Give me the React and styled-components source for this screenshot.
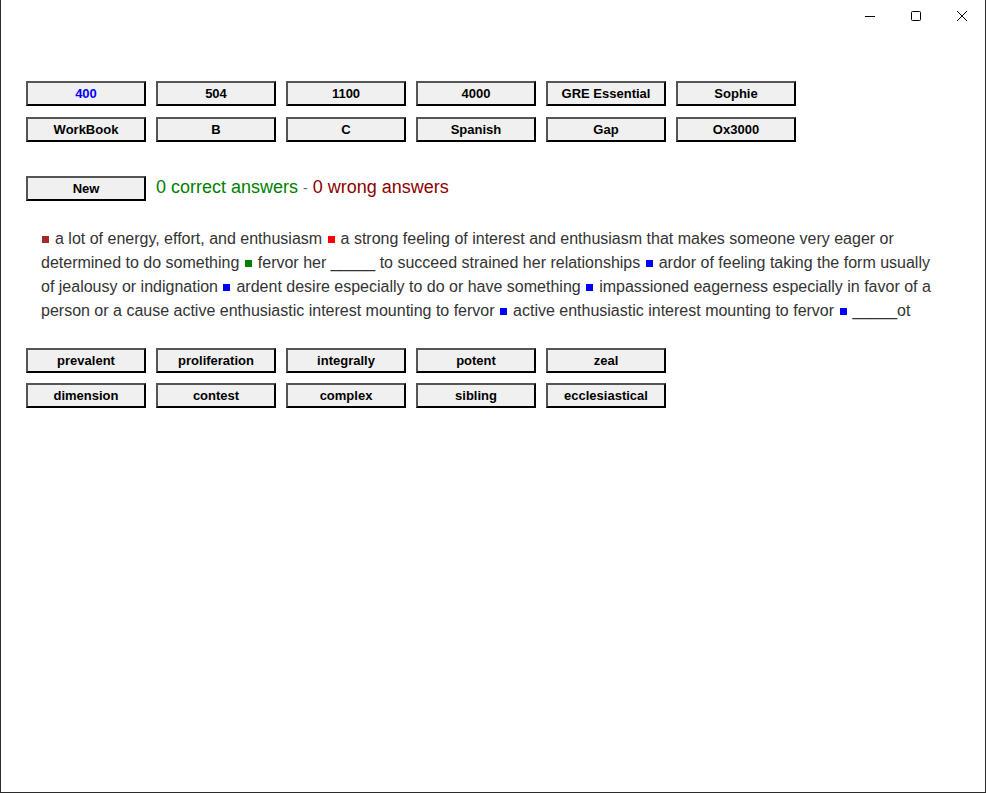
import React from 'react';
import styled, { createGlobalStyle } from 'styled-components';

const GlobalStyle = createGlobalStyle`
  html, body {
    margin: 0;
    padding: 0;
    background: #fff;
  }
  body {
    font-family: "Liberation Sans", Arial, sans-serif;
  }
`;

const Window = styled.div`
  width: 986px;
  height: 793px;
  box-sizing: border-box;
  border: 1px solid #2b2b2b;
  border-top: none;
  background: #fff;
  display: flex;
  flex-direction: column;
`;

const TitleBar = styled.div`
  height: 32px;
  display: flex;
  justify-content: flex-end;
`;

const Control = styled.div`
  width: 46px;
  height: 32px;
  display: flex;
  align-items: center;
  justify-content: center;
`;

const Content = styled.div`
  padding: 49px 0 0 25px;
`;

const ButtonGrid = styled.div`
  display: grid;
  grid-template-columns: repeat(${p => p.cols}, 120px);
  column-gap: 10px;
  row-gap: ${p => p.rowGap}px;
`;

const Btn = styled.button`
  width: 120px;
  height: 25px;
  box-sizing: border-box;
  padding: 0;
  background: #f0f0f0;
  border-style: solid;
  border-width: 2px;
  border-color: #555 #000 #000 #555;
  font-family: "Liberation Sans", Arial, sans-serif;
  font-size: 13px;
  font-weight: bold;
  color: ${p => (p.active ? '#0000ff' : '#000')};
  cursor: pointer;
`;

const ScoreRow = styled.div`
  display: flex;
  align-items: center;
  margin-top: 34px;
  gap: 10px;
`;

const Score = styled.div`
  font-size: 18px;
  display: flex;
  align-items: baseline;
  gap: 5px;
  margin-top: -2px;
`;

const Right = styled.span`
  color: #008000;
`;

const Wrong = styled.span`
  color: #8b0000;
`;

const Dash = styled.span`
  color: #666;
  font-size: 14px;
`;

const Definitions = styled.p`
  margin: 26px 0 0 15px;
  width: 900px;
  font-size: 16px;
  line-height: 24px;
  color: #333;
`;

const Mark = styled.span`
  display: inline-block;
  width: 7px;
  height: 7px;
  margin: 0 6px 0 1px;
  background: ${p => p.color};
  vertical-align: 1px;
`;

const WordGrid = styled(ButtonGrid)`
  margin-top: 25px;
`;

const books = ['400', '504', '1100', '4000', 'GRE Essential', 'Sophie', 'WorkBook', 'B', 'C', 'Spanish', 'Gap', 'Ox3000'];
const words = ['prevalent', 'proliferation', 'integrally', 'potent', 'zeal', 'dimension', 'contest', 'complex', 'sibling', 'ecclesiastical'];

const defs = [
  ['#a52a2a', 'a lot of energy, effort, and enthusiasm'],
  ['#ff0000', 'a strong feeling of interest and enthusiasm that makes someone very eager or determined to do something'],
  ['#008000', 'fervor her _____ to succeed strained her relationships'],
  ['#0000ff', 'ardor of feeling taking the form usually of jealousy or indignation'],
  ['#0000ff', 'ardent desire especially to do or have something'],
  ['#0000ff', 'impassioned eagerness especially in favor of a person or a cause active enthusiastic interest mounting to fervor'],
  ['#0000ff', 'active enthusiastic interest mounting to fervor'],
  ['#0000ff', '_____ot'],
];

export default function App() {
  return (
    <>
      <GlobalStyle />
      <Window>
        <TitleBar>
          <Control>
            <svg width="10" height="10" viewBox="0 0 10 10"><path d="M0 5.5h10" stroke="#000" strokeWidth="1" /></svg>
          </Control>
          <Control>
            <svg width="10" height="10" viewBox="0 0 10 10"><rect x="0.5" y="0.5" width="9" height="9" rx="1" fill="none" stroke="#000" strokeWidth="1" /></svg>
          </Control>
          <Control>
            <svg width="10" height="10" viewBox="0 0 10 10"><path d="M0 0L10 10M10 0L0 10" stroke="#000" strokeWidth="1" /></svg>
          </Control>
        </TitleBar>
        <Content>
          <ButtonGrid cols={6} rowGap={11}>
            {books.map((b, i) => (
              <Btn key={b} active={i === 0}>{b}</Btn>
            ))}
          </ButtonGrid>
          <ScoreRow>
            <Btn>New</Btn>
            <Score>
              <Right>0 correct answers</Right>
              <Dash>-</Dash>
              <Wrong>0 wrong answers</Wrong>
            </Score>
          </ScoreRow>
          <Definitions>
            {defs.map(([c, t], i) => (
              <React.Fragment key={i}>
                <Mark color={c} />
                {t}{i < defs.length - 1 ? ' ' : ''}
              </React.Fragment>
            ))}
          </Definitions>
          <WordGrid cols={5} rowGap={10}>
            {words.map(w => (
              <Btn key={w}>{w}</Btn>
            ))}
          </WordGrid>
        </Content>
      </Window>
    </>
  );
}
